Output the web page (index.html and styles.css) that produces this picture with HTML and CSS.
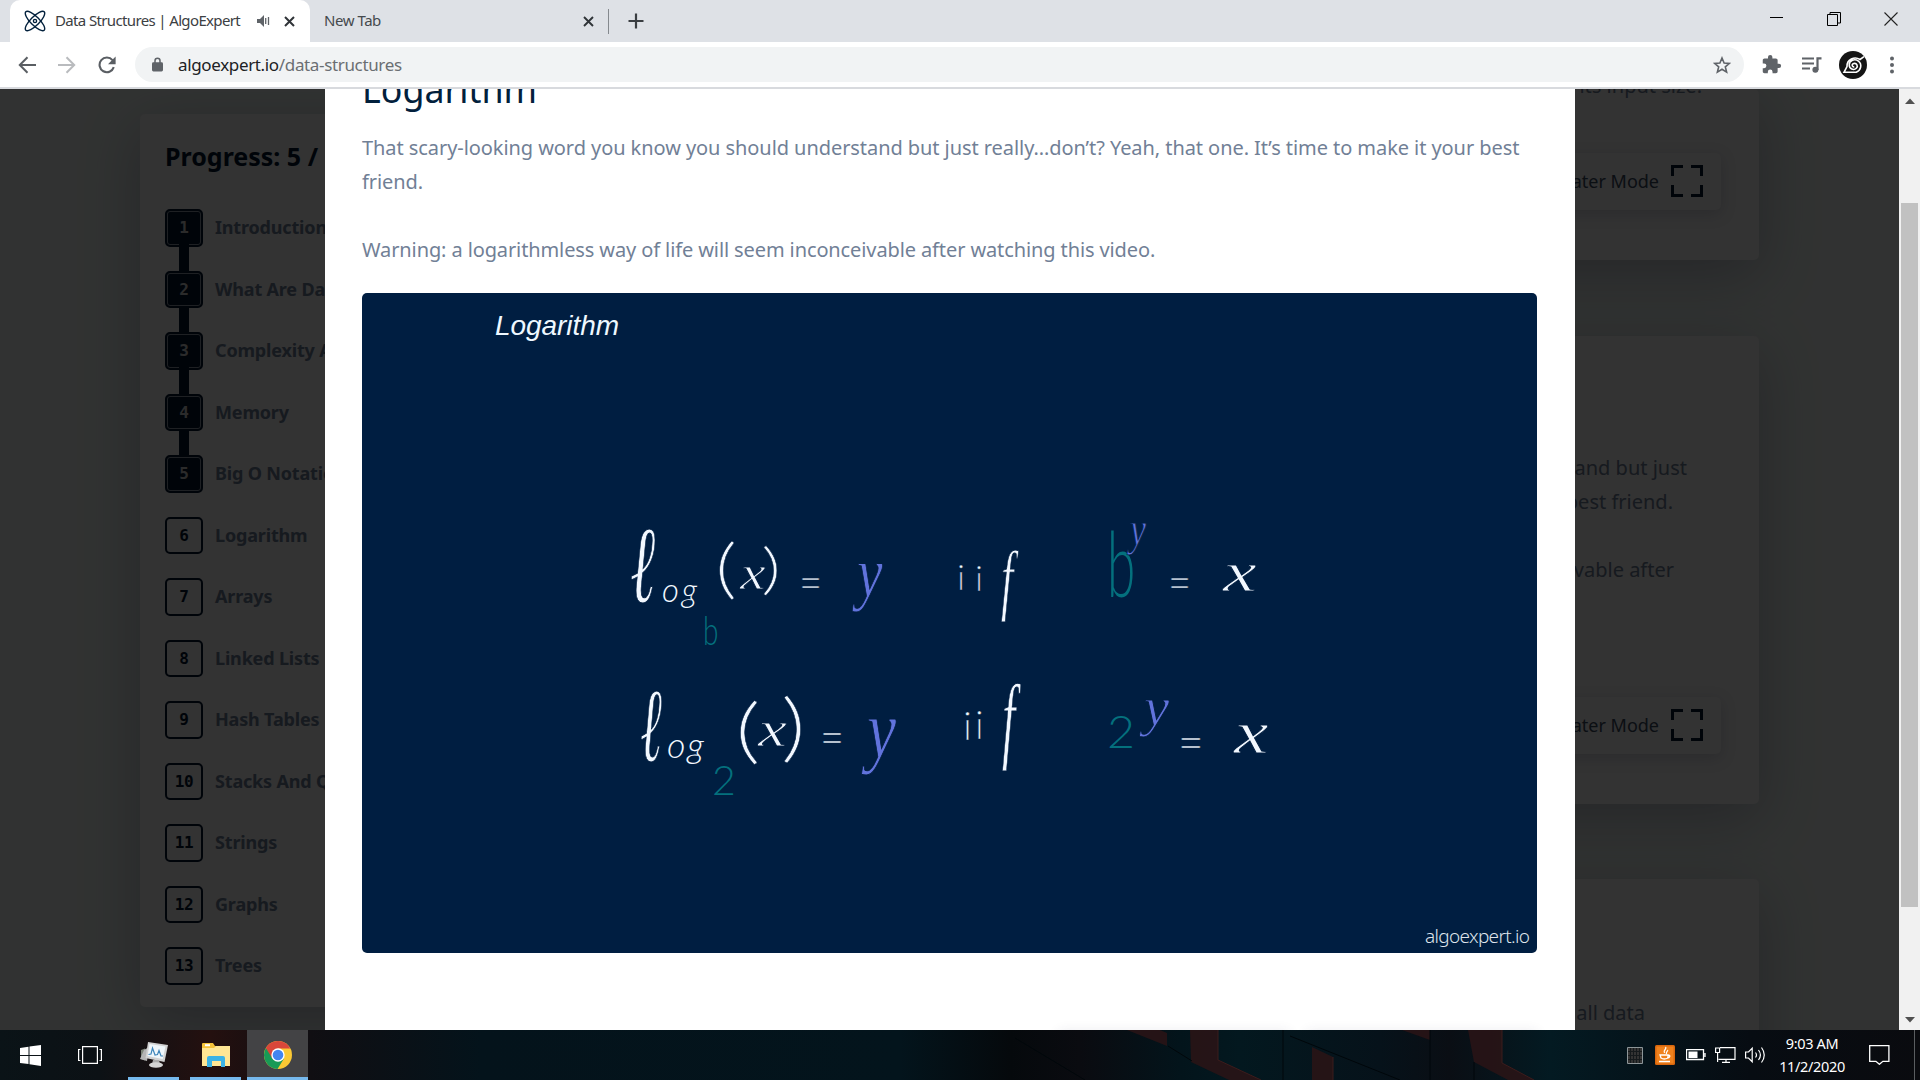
FILE: index.html
```html
<!DOCTYPE html>
<html lang="en">
<head>
<meta charset="utf-8">
<title>Data Structures | AlgoExpert</title>
<link rel="stylesheet" href="styles.css">
</head>
<body>
<div class="screen">
  <header class="tabstrip">
    <div class="tab tab-active">
      <svg class="favicon" viewBox="0 0 22 22" fill="none" stroke="#02203c" stroke-width="1.4"><ellipse cx="11" cy="11" rx="13" ry="4.4" transform="rotate(45 11 11)"/><ellipse cx="11" cy="11" rx="13" ry="4.4" transform="rotate(-45 11 11)"/><circle cx="11" cy="11" r="1.6"/></svg>
      <span class="tab-title title-main">Data Structures | AlgoExpert</span>
      <svg class="speaker" viewBox="0 0 13 12"><path d="M0 4h3l4-4v12L3 8H0z" fill="#5f6368"/><path d="M8.7 3v6M11.5 2v8" stroke="#5f6368" stroke-width="1.3"/></svg>
      <svg class="cross" viewBox="0 0 11 11"><path d="M1 1l9 9M10 1l-9 9" stroke="#303438" stroke-width="2"/></svg>
    </div>
    <div class="tab tab-idle">
      <span class="tab-title">New Tab</span>
      <svg class="cross" viewBox="0 0 11 11"><path d="M1 1l9 9M10 1l-9 9" stroke="#303438" stroke-width="1.9"/></svg>
    </div>
    <i class="tab-sep"></i>
    <svg class="plus" viewBox="0 0 16 16"><path d="M8 0.5v15M.5 8h15" stroke="#3a3e42" stroke-width="2.2"/></svg>
    <div class="window-buttons">
      <svg viewBox="0 0 14 14"><path d="M0 5.5h13" stroke="#000"/></svg>
      <svg viewBox="0 0 14 14" fill="none" stroke="#000"><path d="M.5 2.5h10v11H.5zM3 2.500V.5h10.500v10.500H11"/></svg>
      <svg viewBox="0 0 14 14"><path d="M.5.5l13 13M13.500.5l-13 13" stroke="#222" stroke-width="1.1"/></svg>
    </div>
  </header>
  <div class="toolbar">
    <svg class="nav" viewBox="0 0 18 18" fill="none" stroke="#5a5e63" stroke-width="2"><path d="M18 9H2M9.500 1.300L1.800 9l7.700 7.700"/></svg>
    <svg class="nav" viewBox="0 0 18 18" fill="none" stroke="#b9bbbe" stroke-width="2"><path d="M0 9h16M8.500 1.300L16.200 9l-7.700 7.700"/></svg>
    <svg class="nav" viewBox="0 0 18 18"><path d="M15.800 11.200A7.300 7.300 0 1 1 14.500 4.200" fill="none" stroke="#5a5e63" stroke-width="2.100"/><path d="M17.600.6v7.600H10z" fill="#5a5e63"/></svg>
    <div class="omnibox">
      <svg class="lock" viewBox="0 0 11 15"><path d="M3 6V3.700a2.500 2.500 0 0 1 5 0V6" fill="none" stroke="#5f6368" stroke-width="1.500"/><rect y="5.200" width="11" height="9.300" rx="1.400" fill="#5f6368"/></svg>
      <span class="url">algoexpert.io<span class="path">/data-structures</span></span>
      <svg class="star" viewBox="0 0 18 18"><path d="M9 2l2.100 5 5.300.4-4.100 3.400 1.300 5.300L9 13.200l-4.600 2.900 1.300-5.300L1.600 7.400 6.900 7z" fill="none" stroke="#5f6368" stroke-width="1.600"/></svg>
    </div>
    <svg class="puzzle" viewBox="0 0 24 24"><path fill="#5f6368" d="M20.500 11H19V7c0-1.100-.9-2-2-2h-4V3.500a2.500 2.500 0 0 0-5 0V5H4c-1.100 0-2 .9-2 2v3.800h1.500a2.700 2.700 0 0 1 0 5.400H2V20c0 1.100.9 2 2 2h3.800v-1.500a2.700 2.700 0 0 1 5.400 0V22H17c1.100 0 2-.9 2-2v-4h1.500a2.500 2.500 0 0 0 0-5z"/></svg>
    <svg class="queue" viewBox="0 0 20 16"><path d="M0 1.500h12M0 6.500h12M0 11.500h8" stroke="#5f6368" stroke-width="2"/><path d="M15.500 13V1.300h4" fill="none" stroke="#5f6368" stroke-width="2.200"/><circle cx="13.400" cy="12.800" r="3" fill="#5f6368"/></svg>
    <svg class="avatar" viewBox="0 0 28 28"><circle cx="14" cy="14" r="14" fill="#151515"/><path d="M15.300 15.800c-2.200.6-3-2.600-.6-3.300 3-.8 4.800 2.600 2.600 4.800-2.600 2.500-7 .7-7.100-3.300 0-4.600 5.500-6.700 9.200-3.900 4 3.200 2.700 9.300-2.200 11.200H5L8 15.500c-.3-7 7.500-10.500 13-7l4-2.800" fill="none" stroke="#fff" stroke-width="1.600"/></svg>
    <svg class="dots" viewBox="0 0 4 18" fill="#5f6368"><circle cx="2" cy="2.500" r="2"/><circle cx="2" cy="9" r="2"/><circle cx="2" cy="15.500" r="2"/></svg>
  </div>

  <main class="viewport">
    <div class="page">
      <aside class="progress">
        <h2>Progress: 5 / 15</h2>
        <ol>
          <li class="done"><b>1</b><span>Introduction</span></li>
          <li class="done"><b>2</b><span>What Are Data Structures</span></li>
          <li class="done"><b>3</b><span>Complexity Analysis</span></li>
          <li class="done"><b>4</b><span>Memory</span></li>
          <li class="done last"><b>5</b><span>Big O Notation</span></li>
          <li><b>6</b><span>Logarithm</span></li>
          <li><b>7</b><span>Arrays</span></li>
          <li><b>8</b><span>Linked Lists</span></li>
          <li><b>9</b><span>Hash Tables</span></li>
          <li><b>10</b><span>Stacks And Queues</span></li>
          <li><b>11</b><span>Strings</span></li>
          <li><b>12</b><span>Graphs</span></li>
          <li><b>13</b><span>Trees</span></li>
        </ol>
      </aside>
      <div class="lessons">
        <section class="lesson lesson-a">
          <p class="tail-a">its input size.</p>
          <div class="theater"><span>Theater Mode</span><svg viewBox="0 0 32 32"><path d="M1.500 11V1.500H12M20 1.500h10.500V11M30.500 20v10.500H20M12 30.500H1.500V20" fill="none" stroke="#001430" stroke-width="3"/></svg></div>
        </section>
        <section class="lesson lesson-b">
          <p class="tail-b">and but just</p>
          <p class="tail-c">best friend.</p>
          <p class="tail-d">vable after</p>
          <div class="theater"><span>Theater Mode</span><svg viewBox="0 0 32 32"><path d="M1.500 11V1.500H12M20 1.500h10.500V11M30.500 20v10.500H20M12 30.500H1.500V20" fill="none" stroke="#001430" stroke-width="3"/></svg></div>
        </section>
        <section class="lesson lesson-c">
          <p class="tail-e">all data</p>
        </section>
      </div>
    </div>

    <div class="overlay">
      <article class="modal">
        <h1>Logarithm</h1>
        <p>That scary-looking word you know you should understand but just really…don’t? Yeah, that one. It’s time to make it your best<br>friend.</p>
        <p class="warning">Warning: a logarithmless way of life will seem inconceivable after watching this video.</p>
        <svg class="video" viewBox="362 293 1175 660">
          <text class="slide-title" x="495" y="335" textLength="124">Logarithm</text>
          <g class="ink">
            <text transform="translate(630 602) scale(.62 1.12)" font-size="98">ℓ</text>
            <text class="pen slant" x="662" y="602" font-size="33" textLength="35">og</text>
            <text class="pen teal" transform="translate(703 645) scale(.7 1)" font-size="40">b</text>
            <text class="pen" transform="translate(715 591) scale(1.3 1)" font-size="66">(</text>
            <text transform="translate(740 589) scale(1.2 1)" font-size="48">x</text>
            <text class="pen" transform="translate(761 588) scale(1.4 1)" font-size="56">)</text>
            <text class="pen" transform="translate(799 600) scale(.8 1)" font-size="50">=</text>
            <text class="violet" transform="translate(857 597) scale(.8 1)" font-size="72">y</text>
            <text class="pen" x="957" y="590" font-size="36">i</text>
            <text class="pen" x="975" y="591" font-size="36">i</text>
            <text transform="translate(1001 605) scale(.57 1)" font-size="78">f</text>
            <text class="pen teal" transform="translate(1107 597) scale(.57 1)" font-size="90">b</text>
            <text class="violet" transform="translate(1130 545) scale(.75 1)" font-size="48">y</text>
            <text class="pen" transform="translate(1168 600) scale(.8 1)" font-size="50">=</text>
            <text transform="translate(1223 591) scale(1.35 1)" font-size="56">x</text>

            <text transform="translate(640 761) scale(.56 1.12)" font-size="94">ℓ</text>
            <text class="pen slant" x="667" y="758" font-size="36" textLength="37">og</text>
            <text class="pen teal" transform="translate(712 795) scale(1 1)" font-size="41">2</text>
            <text class="pen" transform="translate(735 755) scale(1.4 1)" font-size="71">(</text>
            <text transform="translate(758 746) scale(1.3 1)" font-size="50">x</text>
            <text class="pen" transform="translate(781 753) scale(1.3 1)" font-size="74">)</text>
            <text class="pen" transform="translate(820 755) scale(.8 1)" font-size="52">=</text>
            <text class="violet" transform="translate(867 757) scale(.8 1)" font-size="82">y</text>
            <text class="pen" x="963" y="740" font-size="40">i</text>
            <text class="pen" x="975" y="739" font-size="39">i</text>
            <text transform="translate(1002 751) scale(.5 1)" font-size="96">f</text>
            <text class="pen teal" transform="translate(1107 748) scale(1.05 1)" font-size="46">2</text>
            <text class="violet" transform="translate(1144 725) scale(1.050 1)" font-size="54">y</text>
            <text class="pen" transform="translate(1178 760) scale(.85 1)" font-size="52">=</text>
            <text transform="translate(1234 753) scale(1.250 1)" font-size="62">x</text>
          </g>
          <text class="watermark" x="1425" y="943" textLength="105">algoexpert.io</text>
        </svg>
        <div class="modal-actions"><i></i><i></i></div>
      </article>
    </div>

    <div class="scrollbar">
      <svg viewBox="0 0 10 6"><path d="M0 6l5-5.500L10 6z" fill="#505050"/></svg>
      <i class="thumb"></i>
      <svg viewBox="0 0 10 6"><path d="M0 0l5 5.500L10 0z" fill="#505050"/></svg>
    </div>
  </main>

  <footer class="taskbar">
    <div class="tasks">
      <div class="task start"><svg width="21" height="21" viewBox="0 0 21 21" fill="#fff"><path d="M0 3l8.500-1.300v8.300H0zM9.500 1.500L21 0v10H9.500zM0 11h8.500v8L0 17.900zM9.500 11H21v10L9.500 19.200z"/></svg></div>
      <div class="task"><svg width="24" height="18" viewBox="0 0 24 18" fill="none" stroke="#fff" stroke-width="1.200"><path d="M4.600.6h14.800v16.800H4.600zM2.500 3.500H.6v11h1.900M21.500 3.500h1.900v11h-1.900"/></svg></div>
      <div class="task open"><svg width="28" height="26" viewBox="0 0 28 26"><path d="M1 8l4-1.500v12L1 17z" fill="#7d8579"/><path d="M4 8l5-3-2 14-7-2z" fill="#b5b5b5"/><path d="M8 0l20 3-3.500 17L5.500 16z" fill="#d2d2d2"/><path d="M9.500 2l16 2.500-2.800 12.500L7.500 14z" fill="#f0f7fb"/><path d="M8.500 12.500l2.500-.5 1.500-6 2.500 7 2.500-.5 1.500-4 2 5.500h2" fill="none" stroke="#3f86bb" stroke-width="1.200"/><path d="M13 18h6l1 4h-8z" fill="#aaa"/><ellipse cx="16" cy="23" rx="7" ry="2.800" fill="#d5d5d5"/></svg></div>
      <div class="task open"><svg width="28" height="24" viewBox="0 0 28 24"><path d="M0 1q0-1 1-1h10l2 3h14q1 0 1 1v18H0z" fill="#f5c33b"/><path d="M0 5h12l2-2h14v20H0z" fill="#ffe694"/><path d="M3 1.200h5v2H3z" fill="#fff"/><path d="M5 24v-9q0-2 2-2h14q2 0 2 2v9h-4v-6h-9v6z" fill="#3bb3e6"/></svg></div>
      <div class="task open current"><svg width="28" height="28" viewBox="0 0 28 28"><circle cx="14" cy="14" r="14" fill="#fbc934"/><path d="M14 14L1.880 7A14 14 0 0 0 13.500 28L20 17.500z" fill="#189a56"/><path d="M14 7.500h12.300A14 14 0 0 0 1.880 7L8.300 17.500z" fill="#d9473a"/><circle cx="14" cy="14" r="6.700" fill="#fff"/><circle cx="14" cy="14" r="5.300" fill="#4285f0"/></svg></div>
    </div>
    <svg class="wallpaper" viewBox="1000 1030 600 50"><g fill="#2b1416" opacity=".85"><path d="M1127 1030h33l7 3v13z"/><path d="M1190 1030h28v30l43 20h-32l-38-18z"/><path d="M1312 1047l21 10v23h-21z"/><path d="M1402 1030h28v10z"/><path d="M1468 1030h34v33l32 17h-26l-34-18z"/></g><path d="M1218 1030v30l43 20M1333 1057v23M1502 1030v33l32 17" stroke="#3d1c1c" fill="none"/><path d="M1015 1038l70 42M1168 1046l24 15M1283 1030v50M1430 1030v50M1290 1036l110 44M1474 1062v18" stroke="#01070a" fill="none"/></svg>
    <div class="tray">
      <svg width="16" height="17" viewBox="0 0 16 17"><path d="M.5.5h15v16H.5z" fill="#333" stroke="#8d9598"/><path d="M3.500 1v15M6.500 1v15M9.500 1v15M12.500 1v15M1 4.500h14M1 8.500h14M1 12.500h14" stroke="#151a1c"/></svg>
      <svg class="java" width="20" height="20" viewBox="0 0 20 20"><rect width="20" height="20" rx="1.500" fill="#d9660d"/><rect x="1.500" y="1.500" width="17" height="17" fill="#f0811c"/><path d="M10.500 2c2 2-3 3-1 6M12.500 5c1 1-2 2-1 4M5 10h8v3q-4 2-7 0zM13 10c3 0 2 3-1 3M4 16.500h11" fill="none" stroke="#fff" stroke-width="1.300"/></svg>
      <svg class="batt" width="20" height="12" viewBox="0 0 20 12"><path d="M.5.5h17v10H.5zM19 4v4" fill="none" stroke="#fff" stroke-width="1.300"/><path d="M2.500 2.500h9v6.500h-9z" fill="#fff"/></svg>
      <svg class="net" width="21" height="16" viewBox="0 0 21 16" fill="none" stroke="#fff" stroke-width="1.200"><path d="M5 .6h15v11.800H3.500M11 12.500v3M7 15.400h8M.6 1h4v4.500h-4zM2.600 5.500V15"/></svg>
      <svg class="vol" width="21" height="18" viewBox="0 0 21 18" fill="none" stroke="#fff" stroke-width="1.200"><path d="M.6 6h2.900l3.700-3.700v13.400L3.500 12H.6zM10.500 6.500q2 2.500 0 5M13.500 4q3.800 5 0 10M16.500 1.500q5.500 7.500 0 15"/></svg>
      <div class="clock"><span>9:03 AM</span><span>11/2/2020</span></div>
      <svg class="note" width="21" height="20" viewBox="0 0 21 20"><path d="M.7.7h19.200v15.600h-6l-3.500 3-3.500-3H.7z" fill="none" stroke="#fff" stroke-width="1.300"/></svg>
      <i class="peek"></i>
    </div>
  </footer>
</div>
</body>
</html>
```
FILE: styles.css
```css
* { box-sizing: border-box; }
body { margin: 0; font-family: "Noto Sans", "Open Sans", sans-serif; }
h1, h2, p, ol { margin: 0; padding: 0; }
svg { display: block; flex: none; }
.screen { width: 1920px; height: 1080px; display: flex; flex-direction: column; overflow: hidden; background: #fff; }

/* browser tabs */
.tabstrip { height: 42px; flex: none; display: flex; align-items: center; padding-left: 10px; background: #dee1e6; }
.tab { display: flex; align-items: center; height: 42px; flex: none; }
.tab-active { width: 300px; padding: 0 15px 0 14px; background: #fff; border-radius: 10px 10px 0 0; }
.favicon { width: 22px; height: 22px; overflow: hidden; }
.tab-title { font-size: 15px; line-height: 20px; margin-top: -2px; color: #45494d; white-space: nowrap; letter-spacing: -.45px; }
.title-main { width: 202px; margin-left: 9px; color: #3c4043; letter-spacing: -.64px; }
.speaker { width: 13px; height: 12px; }
.tab .cross { width: 11px; height: 11px; margin-left: auto; }
.tab-idle { width: 298px; padding: 0 14px; }
.tab-sep { width: 1px; height: 25px; background: #85898e; }
.plus { width: 16px; height: 16px; margin-left: 19px; }
.window-buttons { display: flex; gap: 43px; margin-left: auto; padding-right: 22px; margin-top: -5px; }
.window-buttons svg { width: 14px; height: 14px; }

/* address bar */
.toolbar { height: 47px; flex: none; display: flex; align-items: center; padding: 0 26px 0 18px; background: #fff; border-bottom: 2px solid #d8dade; }
.nav { width: 18px; height: 18px; margin-right: 22px; }
.omnibox { width: 1610px; height: 35px; margin-left: -3px; padding: 0 13px 0 17px; display: flex; align-items: center; border-radius: 18px; background: #f1f3f4; }
.lock { width: 11px; height: 15px; }
.url { margin-left: 15px; font-size: 17px; letter-spacing: -.35px; color: #202124; }
.url .path { color: #6a6e72; }
.star { width: 18px; height: 18px; margin-left: auto; }
.puzzle { width: 21px; height: 21px; margin-left: 17px; }
.queue { width: 20px; height: 16px; margin-left: 20px; }
.avatar { width: 28px; height: 28px; margin-left: 17px; }
.dots { width: 4px; height: 18px; margin-left: 23px; }

/* page behind the dialog */
.viewport { position: relative; height: 941px; flex: none; display: flex; overflow: hidden; }
.page { width: 1899px; flex: none; display: flex; isolation: isolate; background: #f3fbf7; }
.progress { width: 360px; height: 893px; flex: none; margin: 25px 0 0 140px; padding: 24px 25px; border-radius: 5px; background: #fcfcfc; box-shadow: 0 15px 60px rgba(50, 50, 93, .3); }
.progress h2 { height: 36px; line-height: 36px; font-size: 25px; color: #001430; white-space: nowrap; }
.progress ol { margin-top: 35px; list-style: none; }
.progress li { height: 61.5px; display: flex; align-items: flex-start; position: relative; }
.progress b { width: 38px; height: 37.500px; flex: none; border: 2px solid #001430; border-radius: 5px; color: #001430; font: bold 16px/33px "DejaVu Sans Mono", monospace; text-align: center; letter-spacing: -.3px; }
.progress .done b { background: #001430; color: #d8d8d8; box-shadow: inset 0 0 0 1px #94a0ae; }
.progress .done:not(.last)::after { content: ""; position: absolute; left: 14px; top: 35px; width: 10px; height: 28px; background: #001430; }
.progress span { margin-left: 12px; font-weight: bold; font-size: 18px; line-height: 37px; letter-spacing: -.17px; color: #71809a; white-space: nowrap; }
.lessons { width: 1209px; margin-left: 50px; display: flex; flex-direction: column; }
.lesson { padding-right: 38px; border-radius: 5px; background: #fcfcfc; box-shadow: 0 15px 60px rgba(50, 50, 93, .3); display: flex; flex-direction: column; align-items: flex-end; flex: none; }
.lesson p { height: 34px; font-size: 20px; line-height: 34px; color: #71809a; white-space: nowrap; }
.lesson-a { height: 171px; }
.lesson-a p { margin: -20px 19px 0 0; }
.lesson-a .theater { margin-top: 50px; }
.lesson-b { height: 468px; margin-top: 76px; padding-top: 115px; }
.lesson-b .tail-b { margin-top: 0; margin-right: 34px; }
.lesson-b .tail-c { margin-right: 48px; }
.lesson-b .tail-d { margin-top: 34px; margin-right: 47px; }
.lesson-b .theater { margin-top: 110px; }
.lesson-c { height: 200px; margin-top: 75px; padding-top: 117px; }
.lesson-c p { margin-right: 76px; }
.theater { width: 240px; height: 57px; padding: 0 18px 2px 0; display: flex; align-items: center; justify-content: flex-end; gap: 12px; border-radius: 5px; box-shadow: 0 4px 16px rgba(50, 50, 93, .2); font-size: 18px; color: #3a4a62; }
.theater svg { width: 32px; height: 32px; }

/* dialog */
.overlay { position: absolute; inset: 0 21px 0 0; display: flex; padding-left: 325px; background: rgba(0, 0, 0, .8); }
.modal { width: 1250px; height: 941px; padding: 0 37px; display: flex; flex-direction: column; overflow: hidden; background: #fff; }
.modal h1 { height: 50px; margin: -25px 0 16.600px; line-height: 50px; font-size: 35.800px; font-weight: 400; color: #02203c; flex: none; }
.modal p { font-size: 20px; line-height: 34px; letter-spacing: -.068px; color: #718096; white-space: nowrap; flex: none; }
.modal .warning { margin-top: 34px; letter-spacing: -.11px; }
.video { width: 1175px; height: 660px; margin-top: 26.400px; border-radius: 5px; background: #001e41; }
.slide-title { font: italic 28px "Liberation Sans", sans-serif; fill: #eef8ff; }
.watermark { font: 300 19px "Noto Sans", "Open Sans", sans-serif; fill: #dfe5ec; }

/* pen notes on the slide: the outline in the slide's colour thins the letters */
.ink { font-family: "Liberation Serif", serif; font-style: italic; fill: #f2f8ff; stroke: #001e41; stroke-width: .9px; }
.ink .pen { font-family: Lato, sans-serif; font-weight: 300; font-style: normal; stroke-width: .4px; }
.ink .slant { font-style: italic; stroke: none; }
.ink .teal { fill: #04707d; stroke: none; }
.ink .violet { fill: #6173dc; }
.modal-actions { display: flex; justify-content: flex-end; gap: 16px; margin-top: 78px; }
.modal-actions i { width: 232px; height: 40px; border-radius: 5px; box-shadow: 0 0 12px rgba(50, 50, 93, .1); }

.scrollbar { width: 21px; display: flex; flex-direction: column; align-items: center; padding: 9px 0 7px; background: #f1f1f1; }
.scrollbar svg { width: 10px; height: 6px; }
.thumb { width: 17px; height: 704px; margin: 99px 0 auto; background: #c1c1c1; }

/* taskbar */
.taskbar { position: relative; height: 50px; flex: none; display: flex; justify-content: space-between; background: linear-gradient(90deg, #0a1317 0, #0c1115 100px, #24100f 210px, #100e12 310px, #04131b 480px, #03141c 900px, #05090c 1010px, #0a0b10 1080px, #03141b 1180px, #03181f 1240px, #06121a 1380px, #0a0e14 1450px, #031a22 1550px, #070c12 1750px, #0a0b0f 1920px); }
.tasks { display: flex; }
.task { width: 51px; height: 50px; margin-right: 11px; display: flex; align-items: center; justify-content: center; }
.task.start { width: 60px; margin-right: 4px; }
.task.start + .task { margin-right: 13px; }
.task.open { border-bottom: 3px solid #76b9ed; padding-top: 3px; }
.task.current { width: 61px; margin-left: -5px; background: #434345; }
.wallpaper { position: absolute; left: 1000px; top: 0; width: 600px; height: 50px; }
.tray { position: relative; display: flex; align-items: center; color: #fff; }
.java { margin-left: 12px; }
.batt { margin-left: 11px; }
.net { margin-left: 9px; }
.vol { margin-left: 9px; }
.clock { width: 80px; margin-left: 6px; display: flex; flex-direction: column; align-items: center; font-size: 14.500px; line-height: 23px; letter-spacing: -.35px; }
.note { margin-left: 17px; }
.peek { width: 1px; height: 50px; margin: 0 5px 0 24px; background: #5a5d60; }
```
